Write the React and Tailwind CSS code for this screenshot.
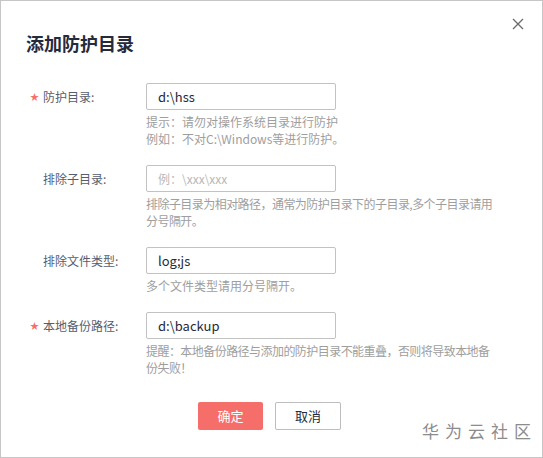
import React from "react";

function Row({ star, label, value, placeholder, hint, hintClass = "" }) {
  return (
    <div className="flex">
      <div className="w-[145px] h-[27px] flex items-center pl-[29px] text-[12px] text-[#575d6c]">
        <span className={"w-[13px] text-[9px] leading-none " + (star ? "text-[#f66f6a]" : "text-transparent")}>★</span>
        <span>{label}</span>
      </div>
      <div className="flex flex-col">
        <input
          readOnly
          value={value}
          placeholder={placeholder}
          className="w-[190px] h-[27px] border border-[#c2c2c2] rounded-[2px] px-[11px] text-[13px] text-[#252b3a] placeholder:text-[#b8b8b8] placeholder:text-[12px] outline-none bg-white"
        />
        <div className={"mt-[3px] w-[350px] text-[12px] leading-[17px] text-[#9e9e9e] " + hintClass}>{hint}</div>
      </div>
    </div>
  );
}

export default function App() {
  return (
    <div className="relative w-[543px] h-[458px] border border-[#c6c6c6] bg-white font-['Noto_Sans_CJK_SC',sans-serif]">
      <svg className="absolute left-[511px] top-[17px]" width="12" height="12" viewBox="0 0 12 12">
        <path d="M1 1L11 11M11 1L1 11" stroke="#6b6b6b" strokeWidth="1.3" fill="none" />
      </svg>
      <h1 className="pl-[25px] pt-[29px] text-[18px] font-bold leading-[26px] text-[#252b3a]">添加防护目录</h1>
      <div className="mt-[27px] flex flex-col gap-[18px]">
        <Row
          star
          label="防护目录:"
          value="d:\hss"
          hint={<>提示：请勿对操作系统目录进行防护<br />例如：不对C:\Windows等进行防护。</>}
        />
        <Row
          label="排除子目录:"
          value=""
          placeholder="例：\xxx\xxx"
          hint="排除子目录为相对路径，通常为防护目录下的子目录,多个子目录请用分号隔开。"
          hintClass="tracking-[-0.55px]"
        />
        <Row label="排除文件类型:" value="log;js" hint="多个文件类型请用分号隔开。" />
        <Row
          star
          label="本地备份路径:"
          value="d:\backup"
          hint="提醒：本地备份路径与添加的防护目录不能重叠，否则将导致本地备份失败！"
          hintClass="tracking-[-0.55px]"
        />
      </div>
      <div className="mt-[26px] flex justify-center gap-[12px] pr-[4px]">
        <button className="w-[65px] h-[28px] rounded-[2px] bg-[#f66e6a] text-white text-[13px]">确定</button>
        <button className="w-[66px] h-[28px] rounded-[2px] border border-[#bdbdbd] bg-white text-[#252b3a] text-[13px]">取消</button>
      </div>
      <div className="absolute left-[421px] top-[418px] text-[17px] leading-[24px] tracking-[6px] text-[#8c8c8c]">华为云社区</div>
    </div>
  );
}
